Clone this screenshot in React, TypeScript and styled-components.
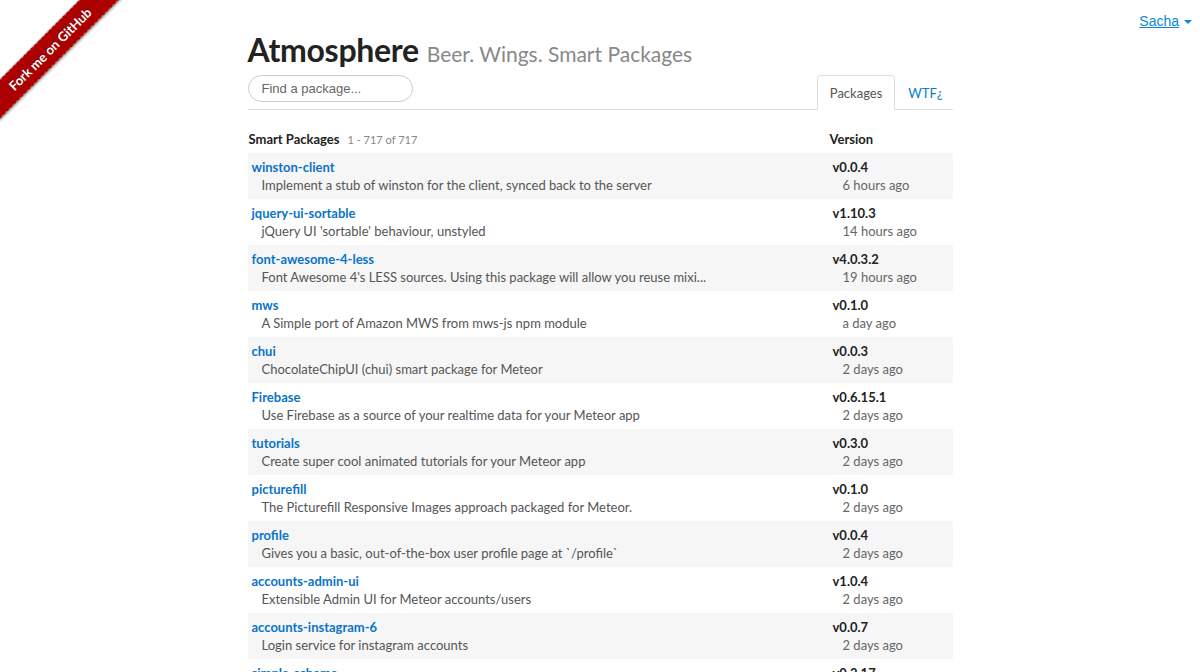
import React from 'react';
import styled, { createGlobalStyle } from 'styled-components';

const GlobalStyle = createGlobalStyle`
  html, body {
    margin: 0;
    padding: 0;
    background: #fff;
  }
  body {
    font-family: Lato, "Open Sans", sans-serif;
    color: #333;
  }
`;

const Page = styled.div`
  position: relative;
  height: 672px;
  overflow: hidden;
`;

const RibbonWrap = styled.div`
  position: absolute;
  top: 0;
  left: 0;
  width: 122px;
  height: 122px;
  overflow: hidden;
`;

const Ribbon = styled.a`
  position: absolute;
  left: -37px;
  top: 35px;
  width: 174px;
  height: 26px;
  transform: rotate(-45deg);
  background: #a00;
  box-shadow: 0 1px 3px rgba(0, 0, 0, 0.5);
  border-top: 1px dashed rgba(255, 255, 255, 0.35);
  border-bottom: 1px dashed rgba(255, 255, 255, 0.35);
  color: #fff;
  font-family: Lato, sans-serif;
  font-weight: bold;
  font-size: 13px;
  line-height: 26px;
  text-align: center;
  text-decoration: none;
  text-shadow: 0 -1px 0 rgba(0, 0, 0, 0.4);
`;

const UserMenu = styled.a`
  position: absolute;
  top: 13px;
  right: 8px;
  font-family: "Liberation Sans", Arial, sans-serif;
  font-size: 14px;
  color: #0a88d6;
  text-decoration: underline;
`;

const Caret = styled.span`
  display: inline-block;
  margin-left: 5px;
  vertical-align: middle;
  border-left: 4px solid transparent;
  border-right: 4px solid transparent;
  border-top: 4px solid #0a88d6;
`;

const Container = styled.div`
  width: 705px;
  margin: 0 auto;
  padding-top: 30px;
`;

const Title = styled.h1`
  margin: 0;
  font-size: 32px;
  line-height: 40px;
  font-weight: 700;
  color: #222;
  letter-spacing: -0.3px;
`;

const Tagline = styled.small`
  margin-left: 8px;
  font-size: 21px;
  font-weight: 400;
  color: #888;
  letter-spacing: 0;
`;

const NavBar = styled.div`
  display: flex;
  align-items: flex-start;
  margin-top: 1px;
  height: 34px;
  border-bottom: 1px solid #ddd;
`;

const Search = styled.input`
  box-sizing: border-box;
  width: 165px;
  height: 27px;
  padding: 0 13px;
  border: 1px solid #ccc;
  border-radius: 14px;
  font-family: "Liberation Sans", Arial, sans-serif;
  font-size: 13px;
  color: #555;
  outline: none;
  &::placeholder {
    color: #666;
  }
`;

const Tabs = styled.div`
  display: flex;
  margin-left: auto;
`;

const Tab = styled.a<{ $active?: boolean }>`
  box-sizing: border-box;
  height: ${(p) => (p.$active ? '35px' : '34px')};
  padding: ${(p) => (p.$active ? '0 12px' : '0 9px 0 12px')};
  line-height: 34px;
  font-size: 13px;
  text-decoration: none;
  color: ${(p) => (p.$active ? '#555' : '#0a7bd0')};
  background: #fff;
  border: 1px solid ${(p) => (p.$active ? '#ddd' : 'transparent')};
  border-bottom-color: ${(p) => (p.$active ? '#fff' : 'transparent')};
  border-radius: 4px 4px 0 0;
`;

const Table = styled.div`
  display: flex;
  flex-direction: column;
`;

const HeadRow = styled.div`
  display: grid;
  grid-template-columns: 1fr 124px;
  padding: 20px 0 4px;
  font-size: 13px;
  line-height: 18px;
  font-weight: 700;
  color: #222;
`;

const HeadCell = styled.div`
  padding-left: 1px;
`;

const Count = styled.span`
  margin-left: 8px;
  font-size: 11px;
  font-weight: 400;
  color: #888;
`;

const Row = styled.div<{ $striped: boolean }>`
  display: grid;
  grid-template-columns: 1fr 124px;
  height: 46px;
  flex-shrink: 0;
  box-sizing: border-box;
  padding: 5px 0;
  background: ${(p) => (p.$striped ? '#f6f6f6' : '#fff')};
`;

const Cell = styled.div`
  display: flex;
  flex-direction: column;
  padding-left: 4px;
  overflow: hidden;
`;

const Name = styled.a`
  font-size: 13px;
  line-height: 18px;
  font-weight: 700;
  color: #0a74c9;
  text-decoration: none;
`;

const Desc = styled.div`
  padding-left: 10px;
  font-size: 13px;
  line-height: 18px;
  color: #555;
  white-space: nowrap;
`;

const Version = styled.div`
  font-size: 13px;
  line-height: 18px;
  font-weight: 700;
  color: #222;
`;

const When = styled.div`
  padding-left: 10px;
  font-size: 13px;
  line-height: 18px;
  color: #666;
`;

const packages = [
  ['winston-client', 'Implement a stub of winston for the client, synced back to the server', 'v0.0.4', '6 hours ago'],
  ['jquery-ui-sortable', "jQuery UI 'sortable' behaviour, unstyled", 'v1.10.3', '14 hours ago'],
  ['font-awesome-4-less', "Font Awesome 4's LESS sources. Using this package will allow you reuse mixi...", 'v4.0.3.2', '19 hours ago'],
  ['mws', 'A Simple port of Amazon MWS from mws-js npm module', 'v0.1.0', 'a day ago'],
  ['chui', 'ChocolateChipUI (chui) smart package for Meteor', 'v0.0.3', '2 days ago'],
  ['Firebase', 'Use Firebase as a source of your realtime data for your Meteor app', 'v0.6.15.1', '2 days ago'],
  ['tutorials', 'Create super cool animated tutorials for your Meteor app', 'v0.3.0', '2 days ago'],
  ['picturefill', 'The Picturefill Responsive Images approach packaged for Meteor.', 'v0.1.0', '2 days ago'],
  ['profile', 'Gives you a basic, out-of-the-box user profile page at `/profile`', 'v0.0.4', '2 days ago'],
  ['accounts-admin-ui', 'Extensible Admin UI for Meteor accounts/users', 'v1.0.4', '2 days ago'],
  ['accounts-instagram-6', 'Login service for instagram accounts', 'v0.0.7', '2 days ago'],
  ['simple-schema', 'A simple, reactive schema validation smart package for Meteor', 'v0.2.17', '2 days ago'],
];

const App: React.FC = () => {
  return (
    <Page>
      <GlobalStyle />
      <RibbonWrap>
        <Ribbon href="#">Fork me on GitHub</Ribbon>
      </RibbonWrap>
      <UserMenu href="#">
        Sacha
        <Caret />
      </UserMenu>
      <Container>
        <Title>
          Atmosphere
          <Tagline>Beer. Wings. Smart Packages</Tagline>
        </Title>
        <NavBar>
          <Search type="text" placeholder="Find a package..." />
          <Tabs>
            <Tab $active href="#">Packages</Tab>
            <Tab href="#">WTF¿</Tab>
          </Tabs>
        </NavBar>
        <Table>
          <HeadRow>
            <HeadCell>
              Smart Packages
              <Count>1 - 717 of 717</Count>
            </HeadCell>
            <HeadCell>Version</HeadCell>
          </HeadRow>
          {packages.map(([name, desc, version, when], i) => (
            <Row key={name} $striped={i % 2 === 0}>
              <Cell>
                <Name href="#">{name}</Name>
                <Desc>{desc}</Desc>
              </Cell>
              <Cell>
                <Version>{version}</Version>
                <When>{when}</When>
              </Cell>
            </Row>
          ))}
        </Table>
      </Container>
    </Page>
  );
};

export default App;
